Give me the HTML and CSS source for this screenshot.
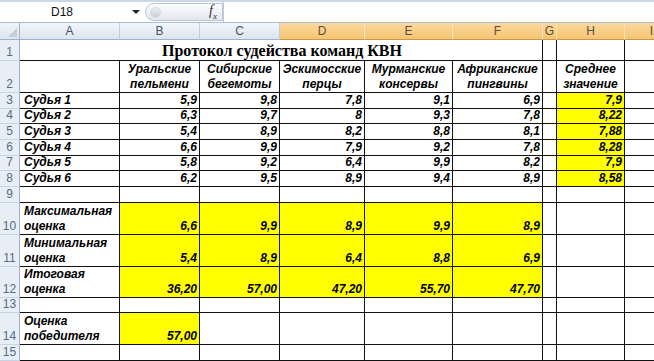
FILE: index.html
```html
<!DOCTYPE html>
<html lang="ru">
<head>
    <meta charset="UTF-8">
    <meta name="viewport" content="width=device-width, initial-scale=1.0">
    <title>Протокол судейства команд КВН</title>
    <link rel="stylesheet" href="styles.css">
</head>
<body>
    <!-- Строка формул -->
    <div class="fbar">
        <div class="namebox">D18</div>
        <div class="drop"><span class="tri"></span></div>
        <div class="fxbox">
            <span class="dot"></span>
            <span class="fx">f<sub>x</sub></span>
        </div>
        <div class="finput"></div>
    </div>

    <div class="sheet">
        <!-- Заголовки столбцов -->
        <div class="corner"><span class="corner-tri"></span></div>
        <div class="ch">A</div>
        <div class="ch">B</div>
        <div class="ch">C</div>
        <div class="ch sel">D</div>
        <div class="ch sel">E</div>
        <div class="ch sel">F</div>
        <div class="ch sel">G</div>
        <div class="ch sel">H</div>
        <div class="ch sel">I</div>

        <!-- 1 -->
        <div class="rh">1</div>
        <div class="c title">Протокол судейства команд КВН</div>
        <div class="c"></div>
        <div class="c"></div>
        <div class="c"></div>

        <!-- 2 -->
        <div class="rh">2</div>
        <div class="c"></div>
        <div class="c hd">Уральские<br>пельмени</div>
        <div class="c hd">Сибирские<br>бегемоты</div>
        <div class="c hd">Эскимосские<br>перцы</div>
        <div class="c hd">Мурманские<br>консервы</div>
        <div class="c hd">Африканские<br>пингвины</div>
        <div class="c"></div>
        <div class="c hd">Среднее<br>значение</div>
        <div class="c"></div>

        <!-- 3 -->
        <div class="rh">3</div>
        <div class="c">Судья 1</div>
        <div class="c n">5,9</div>
        <div class="c n">9,8</div>
        <div class="c n">7,8</div>
        <div class="c n">9,1</div>
        <div class="c n">6,9</div>
        <div class="c"></div>
        <div class="c n y">7,9</div>
        <div class="c"></div>

        <!-- 4 -->
        <div class="rh">4</div>
        <div class="c">Судья 2</div>
        <div class="c n">6,3</div>
        <div class="c n">9,7</div>
        <div class="c n">8</div>
        <div class="c n">9,3</div>
        <div class="c n">7,8</div>
        <div class="c"></div>
        <div class="c n y">8,22</div>
        <div class="c"></div>

        <!-- 5 -->
        <div class="rh">5</div>
        <div class="c">Судья 3</div>
        <div class="c n">5,4</div>
        <div class="c n">8,9</div>
        <div class="c n">8,2</div>
        <div class="c n">8,8</div>
        <div class="c n">8,1</div>
        <div class="c"></div>
        <div class="c n y">7,88</div>
        <div class="c"></div>

        <!-- 6 -->
        <div class="rh">6</div>
        <div class="c">Судья 4</div>
        <div class="c n">6,6</div>
        <div class="c n">9,9</div>
        <div class="c n">7,9</div>
        <div class="c n">9,2</div>
        <div class="c n">7,8</div>
        <div class="c"></div>
        <div class="c n y">8,28</div>
        <div class="c"></div>

        <!-- 7 -->
        <div class="rh">7</div>
        <div class="c">Судья 5</div>
        <div class="c n">5,8</div>
        <div class="c n">9,2</div>
        <div class="c n">6,4</div>
        <div class="c n">9,9</div>
        <div class="c n">8,2</div>
        <div class="c"></div>
        <div class="c n y">7,9</div>
        <div class="c"></div>

        <!-- 8 -->
        <div class="rh">8</div>
        <div class="c">Судья 6</div>
        <div class="c n">6,2</div>
        <div class="c n">9,5</div>
        <div class="c n">8,9</div>
        <div class="c n">9,4</div>
        <div class="c n">8,9</div>
        <div class="c"></div>
        <div class="c n y">8,58</div>
        <div class="c"></div>

        <!-- 9 -->
        <div class="rh">9</div>
        <div class="c"></div>
        <div class="c"></div>
        <div class="c"></div>
        <div class="c"></div>
        <div class="c"></div>
        <div class="c"></div>
        <div class="c"></div>
        <div class="c"></div>
        <div class="c"></div>

        <!-- 10 -->
        <div class="rh">10</div>
        <div class="c">Максимальная<br>оценка</div>
        <div class="c n y">6,6</div>
        <div class="c n y">9,9</div>
        <div class="c n y">8,9</div>
        <div class="c n y">9,9</div>
        <div class="c n y">8,9</div>
        <div class="c"></div>
        <div class="c"></div>
        <div class="c"></div>

        <!-- 11 -->
        <div class="rh">11</div>
        <div class="c">Минимальная<br>оценка</div>
        <div class="c n y">5,4</div>
        <div class="c n y">8,9</div>
        <div class="c n y">6,4</div>
        <div class="c n y">8,8</div>
        <div class="c n y">6,9</div>
        <div class="c"></div>
        <div class="c"></div>
        <div class="c"></div>

        <!-- 12 -->
        <div class="rh">12</div>
        <div class="c">Итоговая<br>оценка</div>
        <div class="c n y">36,20</div>
        <div class="c n y">57,00</div>
        <div class="c n y">47,20</div>
        <div class="c n y">55,70</div>
        <div class="c n y">47,70</div>
        <div class="c"></div>
        <div class="c"></div>
        <div class="c"></div>

        <!-- 13 -->
        <div class="rh">13</div>
        <div class="c"></div>
        <div class="c"></div>
        <div class="c"></div>
        <div class="c"></div>
        <div class="c"></div>
        <div class="c"></div>
        <div class="c"></div>
        <div class="c"></div>
        <div class="c"></div>

        <!-- 14 -->
        <div class="rh">14</div>
        <div class="c">Оценка<br>победителя</div>
        <div class="c n y">57,00</div>
        <div class="c"></div>
        <div class="c"></div>
        <div class="c"></div>
        <div class="c"></div>
        <div class="c"></div>
        <div class="c"></div>
        <div class="c"></div>

        <!-- 15 -->
        <div class="rh">15</div>
        <div class="c"></div>
        <div class="c"></div>
        <div class="c"></div>
        <div class="c"></div>
        <div class="c"></div>
        <div class="c"></div>
        <div class="c"></div>
        <div class="c"></div>
        <div class="c"></div>
    </div>
</body>
</html>
```

FILE: styles.css
```css
body {
    margin: 0;
    width: 654px;
    height: 361px;
    overflow: hidden;
    background-color: #fff;
    font-family: "Liberation Sans", Arial, sans-serif;
}

/* строка формул */
.fbar {
    display: flex;
    align-items: center;
    height: 23px;
    box-sizing: border-box;
    border-top: 2px solid #c9d7e8;
    border-bottom: 1px solid #a9bdd6;
    background-color: #fff;
}

.namebox {
    width: 128px;
    text-align: center;
    font-size: 12px;
    color: #111;
    padding-right: 4px;
    box-sizing: border-box;
}

.drop {
    width: 16px;
    display: flex;
    justify-content: center;
}

.tri {
    width: 0;
    height: 0;
    border-left: 4px solid transparent;
    border-right: 4px solid transparent;
    border-top: 4px solid #222;
}

.fxbox {
    display: flex;
    align-items: center;
    justify-content: space-between;
    width: 78px;
    height: 18px;
    margin-left: 1px;
    padding: 0 5px 0 4px;
    box-sizing: border-box;
    border: 1px solid #b9c5d5;
    border-radius: 10px 0 0 10px;
    background: linear-gradient(#fbfcfe, #e2e7ee);
}

.dot {
    width: 9px;
    height: 9px;
    border-radius: 50%;
    background: linear-gradient(#e9edf2, #c9d0da);
    border: 1px solid #d5dbe3;
}

.fx {
    font-family: "Liberation Serif", serif;
    font-style: italic;
    font-size: 14px;
    color: #333;
    line-height: 1;
}

.fx sub {
    font-size: 9px;
}

.finput {
    flex: 1;
    height: 20px;
    border-left: 1px solid #c2ccd9;
}

/* лист */
.sheet {
    display: grid;
    grid-template-columns: 20px 100px 80px 80px 85px 88px 90px 14px 68px 54px;
    grid-template-rows: 17px 21px 32px 16px 15px 16px 16px 15px 16px 16px 32px 32px 31px 15px 32px 16px;
}

.corner {
    position: relative;
    background: linear-gradient(#f1f5fa, #dde5ef);
    border-right: 1px solid #9fb2ca;
    border-bottom: 1px solid #9fb2ca;
}

.corner-tri {
    position: absolute;
    right: 2px;
    bottom: 2px;
    width: 0;
    height: 0;
    border-left: 9px solid transparent;
    border-bottom: 9px solid #c3cdda;
}

.ch {
    display: flex;
    align-items: center;
    justify-content: center;
    background: linear-gradient(#f3f6fb, #dce4ef);
    border-right: 1px solid #c2cedd;
    border-bottom: 1px solid #9fb2ca;
    font-size: 12px;
    color: #46536a;
}

.ch.sel {
    background: linear-gradient(#fad9a0, #f6c46f);
    border-right-color: #fbe4bb;
    border-bottom-color: #c89a4c;
    color: #5a5040;
}

.rh {
    display: flex;
    align-items: flex-end;
    justify-content: center;
    background-color: #e8eef6;
    border-right: 1px solid #9fb2ca;
    border-bottom: 1px solid #c8d4e3;
    font-size: 12px;
    line-height: 15px;
    color: #5b6a82;
}

.c {
    display: flex;
    align-items: flex-end;
    padding: 0 2px 0 4px;
    border-right: 1px solid #111;
    border-bottom: 1px solid #111;
    font-style: italic;
    font-weight: bold;
    font-size: 12px;
    line-height: 15px;
    color: #000;
    white-space: nowrap;
    overflow: hidden;
}

.c.n {
    justify-content: flex-end;
}

.c.hd {
    justify-content: center;
    text-align: center;
    padding: 0 2px;
}

.c.y {
    background-color: #ffff00;
}

.c.title {
    grid-column: span 6;
    justify-content: center;
    align-items: center;
    font-family: "Liberation Serif", serif;
    font-style: normal;
    font-size: 16px;
}
```
